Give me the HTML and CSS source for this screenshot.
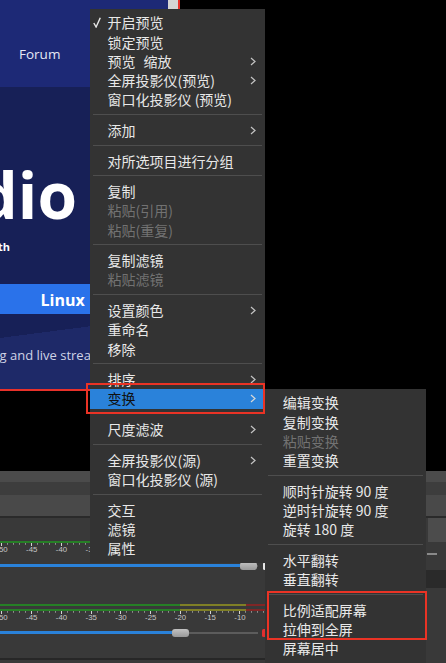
FILE: index.html
```html
<!DOCTYPE html>
<html lang="zh-CN">
<head>
<meta charset="utf-8">
<title>OBS context menu</title>
<link rel="stylesheet" href="styles.css">
</head>
<body>
<div class="screen">
  <div class="preview">
    <div class="site">
      <div class="site-page">
        <div class="site-nav"><span class="nav-link">Forum</span></div>
        <div class="site-hero">
          <div class="hero-title"><span>OBS Studio</span></div>
          <div class="hero-note"><span>Latest release with</span></div>
          <div class="hero-btn">Linux</div>
          <div class="hero-tag">g and live strea</div>
        </div>
      </div>
      <div class="site-scroll"></div>
    </div>
  </div>

  <div class="docks">
    <div class="mixer">
      <div class="band band-1"></div>
      <div class="band band-2"></div>
      <div class="band band-3"></div>
      <div class="band band-4"></div>

      <div class="channel ch-1">
        <div class="bars"><div class="bar"></div></div>
        <div class="ticks"></div>
        <div class="scale"><span>-50</span><span>-45</span><span>-40</span><span>-35</span></div>
        <div class="fader">
          <div class="slider">
            <div class="fill" style="width:240px"></div>
            <div class="knob"></div>
            <div class="rest"></div>
          </div>
          <div class="mute mute-on"></div>
        </div>
      </div>

      <div class="channel ch-2">
        <div class="bars"><div class="bar"></div><div class="bar"></div></div>
        <div class="ticks"></div>
        <div class="scale"><span>-50</span><span>-45</span><span>-40</span><span>-35</span><span>-30</span><span>-25</span><span>-20</span><span>-15</span><span>-10</span><span>-5</span></div>
        <div class="fader">
          <div class="slider">
            <div class="fill" style="width:172px"></div>
            <div class="knob"></div>
            <div class="rest"></div>
          </div>
          <div class="mute mute-off"></div>
        </div>
      </div>
      <div class="mixer-foot"></div>
    </div>

    <div class="side">
      <div class="band band-1"></div>
      <div class="band band-2"></div>
      <div class="band band-3"></div>
      <div class="band band-4"></div>
      <div class="side-combo"></div>
      <div class="side-line"></div>
      <div class="side-dark"></div>
    </div>
  </div>

  <div class="menu menu-main">
    <div class="item"><svg class="check" viewBox="0 0 8 11" width="8" height="11"><polyline points="0.8,6 3.1,10 7.3,0.8" fill="none" stroke="#e8e8e8" stroke-width="1.4"/></svg>开启预览</div>
    <div class="item">锁定预览</div>
    <div class="item">预览<span class="gap"></span>缩放<svg class="arr" viewBox="0 0 6 9" width="6" height="9"><polyline points="1,1 5,4.5 1,8" fill="none" stroke="#c4c4c4" stroke-width="1.2"/></svg></div>
    <div class="item">全屏投影仪(预览)<svg class="arr" viewBox="0 0 6 9" width="6" height="9"><polyline points="1,1 5,4.5 1,8" fill="none" stroke="#c4c4c4" stroke-width="1.2"/></svg></div>
    <div class="item">窗口化投影仪 (预览)</div>
    <div class="sep"></div>
    <div class="item">添加<svg class="arr" viewBox="0 0 6 9" width="6" height="9"><polyline points="1,1 5,4.5 1,8" fill="none" stroke="#c4c4c4" stroke-width="1.2"/></svg></div>
    <div class="sep"></div>
    <div class="item">对所选项目进行分组</div>
    <div class="sep"></div>
    <div class="item">复制</div>
    <div class="item disabled">粘贴(引用)</div>
    <div class="item disabled">粘贴(重复)</div>
    <div class="sep"></div>
    <div class="item">复制滤镜</div>
    <div class="item disabled">粘贴滤镜</div>
    <div class="sep"></div>
    <div class="item">设置颜色<svg class="arr" viewBox="0 0 6 9" width="6" height="9"><polyline points="1,1 5,4.5 1,8" fill="none" stroke="#c4c4c4" stroke-width="1.2"/></svg></div>
    <div class="item">重命名</div>
    <div class="item">移除</div>
    <div class="sep"></div>
    <div class="item">排序<svg class="arr" viewBox="0 0 6 9" width="6" height="9"><polyline points="1,1 5,4.5 1,8" fill="none" stroke="#c4c4c4" stroke-width="1.2"/></svg></div>
    <div class="item active">变换<svg class="arr" viewBox="0 0 6 9" width="6" height="9"><polyline points="1,1 5,4.5 1,8" fill="none" stroke="#d8d8d8" stroke-width="1.2"/></svg></div>
    <div class="sep"></div>
    <div class="item">尺度滤波<svg class="arr" viewBox="0 0 6 9" width="6" height="9"><polyline points="1,1 5,4.5 1,8" fill="none" stroke="#c4c4c4" stroke-width="1.2"/></svg></div>
    <div class="sep"></div>
    <div class="item">全屏投影仪(源)<svg class="arr" viewBox="0 0 6 9" width="6" height="9"><polyline points="1,1 5,4.5 1,8" fill="none" stroke="#c4c4c4" stroke-width="1.2"/></svg></div>
    <div class="item">窗口化投影仪 (源)</div>
    <div class="sep"></div>
    <div class="item">交互</div>
    <div class="item">滤镜</div>
    <div class="item">属性</div>
  </div>

  <div class="menu menu-sub">
    <div class="item">编辑变换</div>
    <div class="item">复制变换</div>
    <div class="item disabled">粘贴变换</div>
    <div class="item">重置变换</div>
    <div class="sep"></div>
    <div class="item">顺时针旋转 90 度</div>
    <div class="item">逆时针旋转 90 度</div>
    <div class="item">旋转 180 度</div>
    <div class="sep"></div>
    <div class="item">水平翻转</div>
    <div class="item">垂直翻转</div>
    <div class="sep"></div>
    <div class="item">比例适配屏幕</div>
    <div class="item">拉伸到全屏</div>
    <div class="item">屏幕居中</div>
  </div>

  <div class="mark mark-1"></div>
  <div class="mark mark-2"></div>
</div>
</body>
</html>
```

FILE: styles.css
```css
* { box-sizing: border-box; }

html, body {
  margin: 0;
  padding: 0;
  background: #000;
}

.screen {
  position: relative;
  width: 446px;
  height: 663px;
  overflow: hidden;
  background: #000;
}

/* ---------- preview (website source) ---------- */
.preview {
  height: 471px;
  background: #000;
}

.site {
  display: flex;
  width: 180px;
  height: 391px;
  border-right: 2px solid #e8312a;
  border-bottom: 2px solid #e8312a;
  overflow: hidden;
}

.site-page {
  width: 168px;
  flex: 0 0 168px;
  overflow: hidden;
  font-family: "Open Sans", "Liberation Sans", sans-serif;
  color: #fff;
}

.site-scroll {
  flex: 0 0 10px;
  background: #d4d4d4;
}

.site-nav {
  height: 87px;
  padding: 44px 0 0 19px;
  background: #1d2976;
}

.nav-link {
  display: block;
  font-size: 13.5px;
  line-height: 20px;
  color: #e6e8f4;
}

.site-hero {
  height: 302px;
  padding-top: 76px;
  background: linear-gradient(172.6deg, #172057 0 77.5%, #1e2968 77.5% 100%);
}

.hero-title {
  display: flex;
  justify-content: flex-end;
  width: 77px;
  white-space: nowrap;
  font-size: 64px;
  font-weight: 700;
  line-height: 64px;
}

.hero-note {
  display: flex;
  justify-content: flex-end;
  width: 10px;
  margin-top: 13px;
  white-space: nowrap;
  font-size: 11px;
  font-weight: 700;
  line-height: 14px;
}

.hero-btn {
  height: 29.5px;
  width: 150px;
  margin-top: 30px;
  padding: 1.5px 0 0 40.5px;
  display: flex;
  align-items: center;
  background: #2a72ea;
  font-size: 16px;
  font-weight: 700;
}

.hero-tag {
  width: 90px;
  overflow: hidden;
  margin: 31px 0 0 -0.5px;
  white-space: nowrap;
  font-size: 13px;
  line-height: 20px;
  color: #cfd3e6;
}

/* ---------- docks ---------- */
.docks {
  display: grid;
  grid-template-columns: 426px 20px;
  height: 192px;
  background: #393939;
}

.band-1 { height: 11px; background: #4b4b4b; }
.band-2 { height: 13px; background: #3d3d3d; }
.band-3 { height: 21px; background: #494949; }
.band-4 { height: 2px;  background: #2a2a2a; }

.mixer {
  display: flex;
  flex-direction: column;
  font-family: "Liberation Sans", "DejaVu Sans", sans-serif;
}

.channel { display: flex; flex-direction: column; }
.ch-1 { padding-top: 23px; }
.ch-2 { padding-top: 34px; }

.bars { display: flex; flex-direction: column; gap: 2.3px; }
.bar {
  height: 2.3px;
  background: linear-gradient(90deg, #267f26 0 180.5px, #7f7f26 180.5px 245.9px, #7f2626 245.9px 299.5px, transparent 299.5px);
}

.ticks {
  height: 2.7px;
  background:
    repeating-linear-gradient(90deg, transparent 0 1.45px, #d4d4d4 1.45px 2.45px, transparent 2.45px 29.75px),
    repeating-linear-gradient(90deg, transparent 0 1.45px, #8c8c8c 1.45px 2.45px, transparent 2.45px 5.95px) 0 0 / 100% 1.8px no-repeat;
}

.scale {
  display: flex;
  height: 8px;
  margin-left: -12.9px;
  overflow: hidden;
  font-size: 7.8px;
  line-height: 8px;
  color: #c6c6c6;
}
.ch-1 .scale { width: 102.9px; }
.ch-2 .scale { width: 277.9px; }
.scale span {
  flex: 0 0 29.75px;
  text-align: center;
}

.fader {
  display: flex;
  align-items: center;
  margin-top: 7.7px;
  height: 8.5px;
}
.ch-2 .fader { margin-top: 6.7px; height: 9px; }

.slider {
  display: flex;
  align-items: center;
  width: 258px;
  height: 100%;
}
.fill { height: 3px; background: #2a82da; flex: 0 0 auto; }
.knob {
  flex: 0 0 16.5px;
  height: 8.3px;
  border-radius: 3px;
  background: linear-gradient(#c2c2c2, #989898);
}
.rest { flex: 1; height: 2px; background: #5c5c5c; }

.mute {
  width: 9px;
  height: 8px;
  margin-left: 4.5px;
  border-radius: 1.5px;
}
.mute-on { background: #e6e6e6; }
.mute-off { background: #e02f2f; margin-left: 3.7px; }

.mixer-foot {
  margin-top: 21px;
  height: 2px;
  background: #272727;
}

.side {
  display: flex;
  flex-direction: column;
}
.side-combo {
  height: 23.7px;
  margin-left: 2px;
  background: #4c4c4c;
}
.side-line {
  height: 2px;
  width: 10px;
  margin-top: 11.5px;
  margin-left: 1px;
  background: #8a8a8a;
}
.side-dark {
  height: 18px;
  margin-top: 15px;
  background: #2a2a2a;
}

/* ---------- context menus ---------- */
.menu {
  position: absolute;
  background: #333333;
  padding: 4.4px 0;
  font-family: "Noto Sans CJK SC", "Noto Sans CJK TC", sans-serif;
  font-size: 14px;
  color: #e8e8e8;
}

.menu-main {
  left: 90px;
  top: 9px;
  width: 175px;
}

.menu-sub {
  left: 265px;
  top: 389px;
  bottom: -10px;
  width: 161px;
}

.item {
  display: flex;
  align-items: center;
  height: 19.2px;
  line-height: 19.2px;
  padding-left: 17.5px;
  white-space: nowrap;
}
.menu-sub .item { padding-left: 17.7px; }

.item.disabled { color: #727272; }
.item.active { background: #2a82da; color: #101010; }

.gap { display: inline-block; width: 8px; }

.check {
  margin-left: -15px;
  margin-right: 7px;
  flex: 0 0 8px;
}

.arr {
  margin-left: auto;
  margin-right: 9px;
  flex: 0 0 6px;
}

.sep {
  height: 1px;
  margin: 4.5px 3px 6px;
  background: #4e4e4e;
}

/* ---------- annotation rectangles ---------- */
.mark {
  position: absolute;
  border: 2.5px solid #ea3325;
}
.mark-1 { left: 86px; top: 383px; width: 179px; height: 31px; }
.mark-2 { left: 266.5px; top: 591px; width: 160.5px; height: 49px; }
```
